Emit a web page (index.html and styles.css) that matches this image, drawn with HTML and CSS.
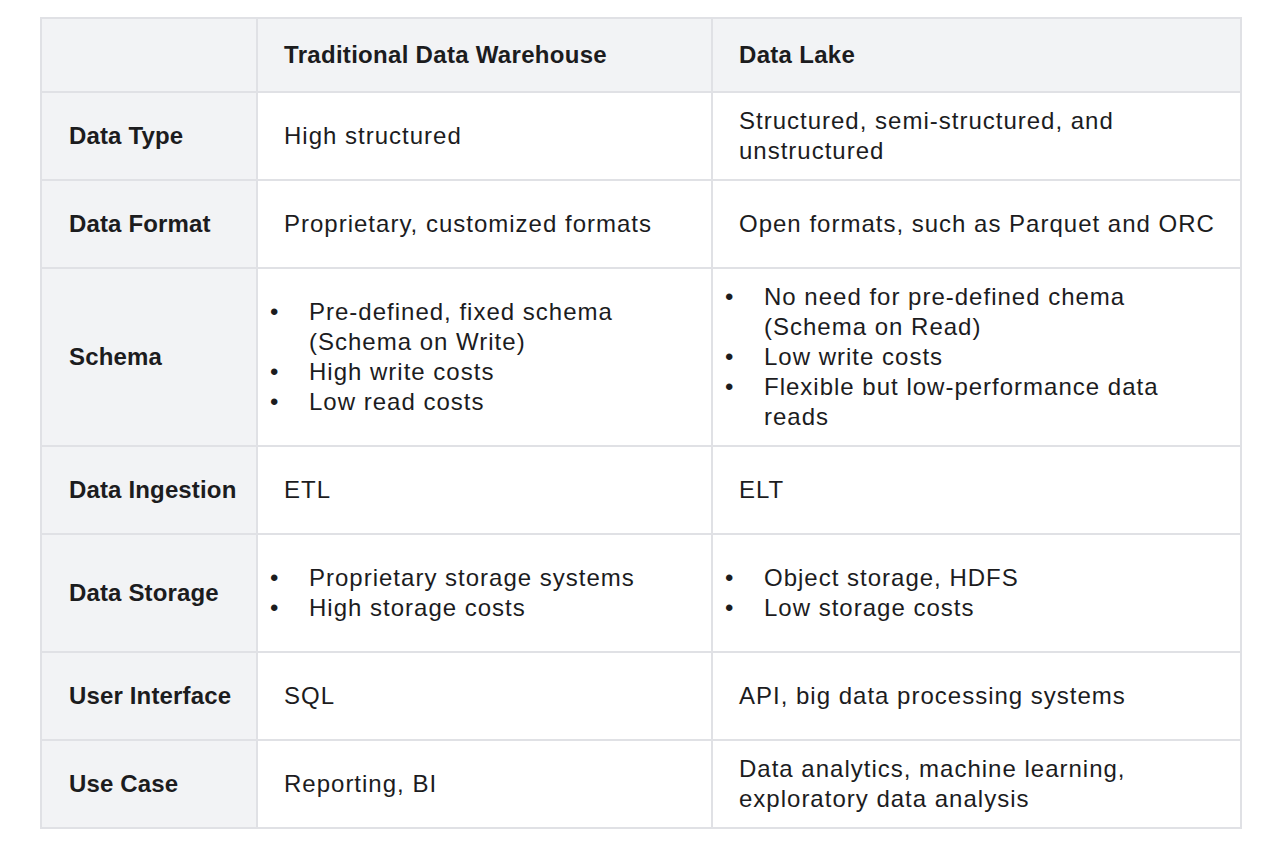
FILE: index.html
```html
<!DOCTYPE html>
<html lang="en">
<head>
<meta charset="utf-8">
<title>Data Warehouse vs Data Lake</title>
<link rel="stylesheet" href="styles.css">
</head>
<body>
<table class="cmp">
  <colgroup>
    <col class="c1"><col class="c2"><col class="c3">
  </colgroup>
  <thead>
    <tr class="r-head">
      <th class="label"></th>
      <th>Traditional Data Warehouse</th>
      <th>Data Lake</th>
    </tr>
  </thead>
  <tbody>
    <tr class="r88">
      <th class="label">Data Type</th>
      <td>High structured</td>
      <td>Structured, semi-structured, and unstructured</td>
    </tr>
    <tr class="r88">
      <th class="label">Data Format</th>
      <td>Proprietary, customized formats</td>
      <td>Open formats, such as Parquet and ORC</td>
    </tr>
    <tr class="r178">
      <th class="label">Schema</th>
      <td class="lst"><ul>
        <li>Pre-defined, fixed schema (Schema on Write)</li>
        <li>High write costs</li>
        <li>Low read costs</li>
      </ul></td>
      <td class="lst"><ul>
        <li>No need for pre-defined chema (Schema on Read)</li>
        <li>Low write costs</li>
        <li>Flexible but low-performance data reads</li>
      </ul></td>
    </tr>
    <tr class="r88">
      <th class="label">Data Ingestion</th>
      <td>ETL</td>
      <td>ELT</td>
    </tr>
    <tr class="r118">
      <th class="label">Data Storage</th>
      <td class="lst"><ul>
        <li>Proprietary storage systems</li>
        <li>High storage costs</li>
      </ul></td>
      <td class="lst"><ul>
        <li>Object storage, HDFS</li>
        <li>Low storage costs</li>
      </ul></td>
    </tr>
    <tr class="r88">
      <th class="label">User Interface</th>
      <td>SQL</td>
      <td>API, big data processing systems</td>
    </tr>
    <tr class="r88">
      <th class="label">Use Case</th>
      <td>Reporting, BI</td>
      <td>Data analytics, machine learning, exploratory data analysis</td>
    </tr>
  </tbody>
</table>
</body>
</html>
```
FILE: styles.css
```css
html, body {
  margin: 0;
  padding: 0;
  background: #ffffff;
}
body {
  padding: 17px 0 0 40px;
  font-family: "Liberation Sans", Arial, sans-serif;
  font-size: 24px;
  line-height: 30px;
  letter-spacing: 1px;
  color: #1c1c1e;
}
.cmp {
  border-collapse: separate;
  border-spacing: 0;
  table-layout: fixed;
  width: 1202px;
  border-top: 2px solid #e0e1e5;
  border-left: 2px solid #e0e1e5;
}
.c1 { width: 216px; }
.c2 { width: 455px; }
.c3 { width: 529px; }
.cmp th,
.cmp td {
  border-right: 2px solid #e0e1e5;
  border-bottom: 2px solid #e0e1e5;
  padding: 0 12px 0 26px;
  text-align: left;
  vertical-align: middle;
  font-weight: 400;
}
.cmp thead th {
  background: #f2f3f5;
  font-weight: 700;
  letter-spacing: 0.3px;
}
.cmp th.label {
  background: #f2f3f5;
  font-weight: 700;
  letter-spacing: 0.15px;
  padding-left: 27px;
  padding-right: 8px;
}
.r-head { height: 74px; }
.r88 { height: 88px; }
.r118 { height: 118px; }
.r178 { height: 178px; }
.cmp td.lst {
  padding-left: 12px;
  padding-right: 30px;
}
.lst ul {
  list-style: none;
  margin: 0;
  padding: 0;
}
.lst li {
  display: flex;
}
.lst li::before {
  content: "\2022";
  flex: 0 0 39px;
  letter-spacing: 0;
}
```
